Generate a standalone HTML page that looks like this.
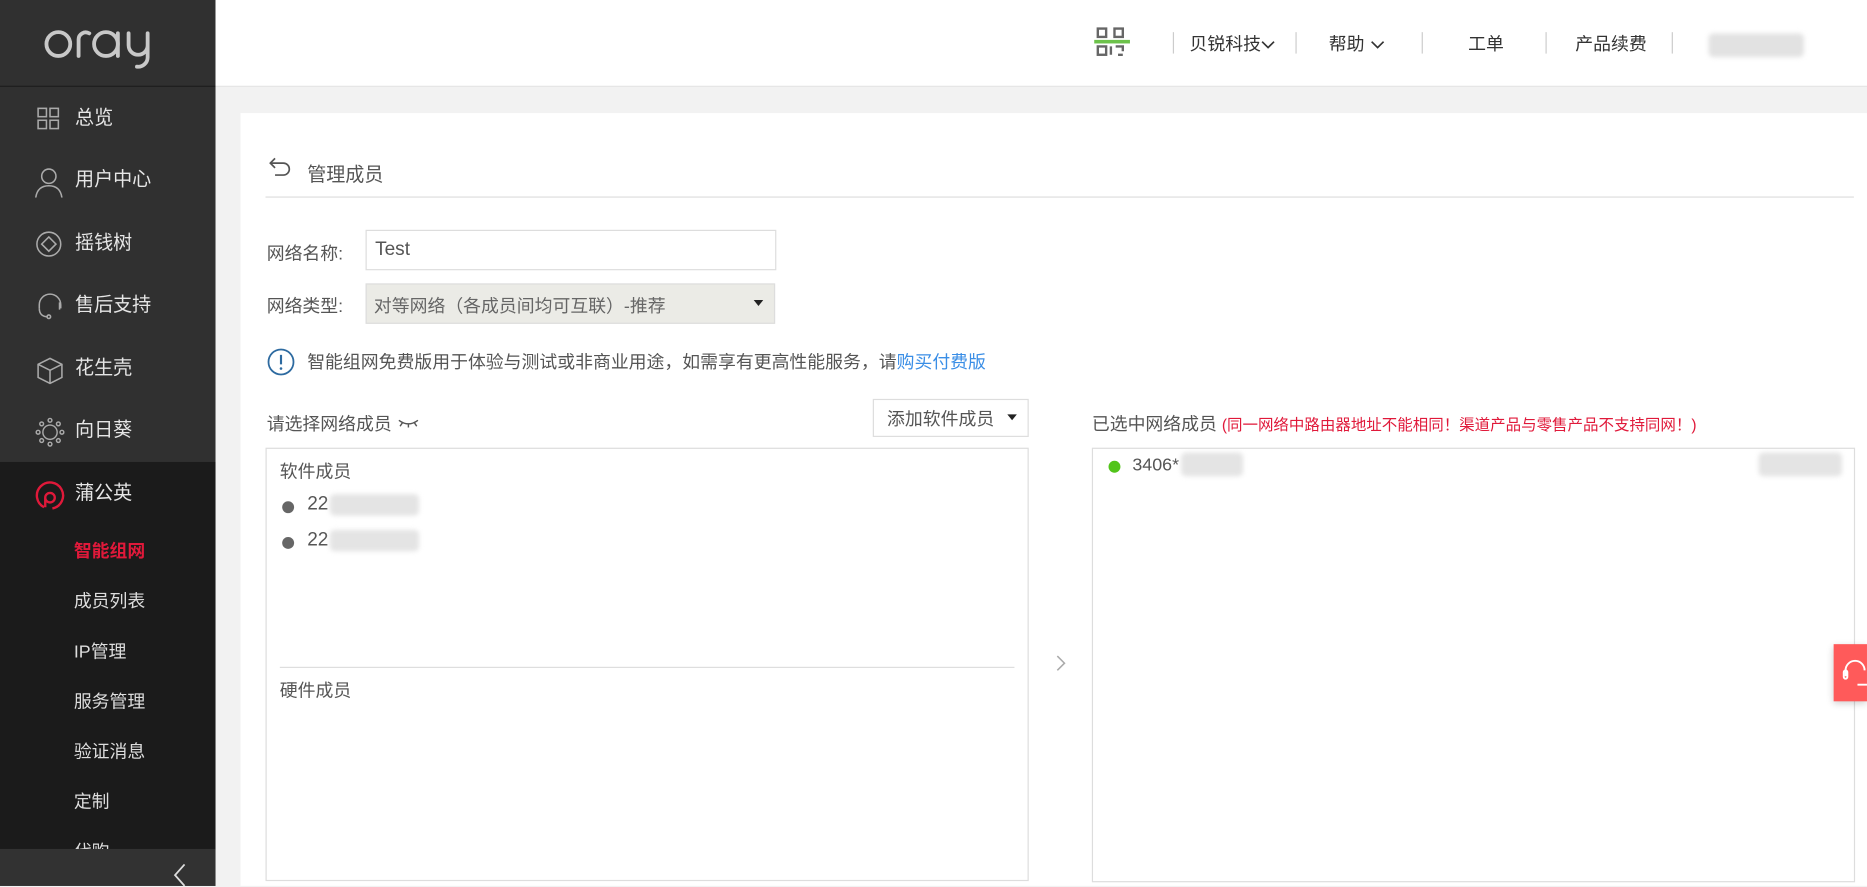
<!DOCTYPE html>
<html><head><meta charset="utf-8"><style>
*{margin:0;padding:0;box-sizing:border-box}
html,body{width:1867px;height:886px;overflow:hidden;background:#f2f2f2}
body{font-family:"Liberation Sans","Noto Sans CJK SC",sans-serif;color:#333}
#w{position:absolute;left:0;top:0;width:1568px;height:744px;transform:scale(1.19068);transform-origin:0 0;background:#f2f2f2}
.abs{position:absolute}
#side{left:0;top:0;width:181px;height:744px;background:#303030}
#logo{left:0;top:0;width:181px;height:73px;border-bottom:1px solid #1e1e1e}
.nav{position:absolute;left:0;width:181px;height:52px;color:#e6e6e6;font-size:16px;line-height:54px;padding-left:63px}
.nav svg{position:absolute;left:29px;top:15px}
#act{left:0;top:388px;width:181px;height:326px;background:#1b1b1b}
.sub{position:absolute;left:62px;font-size:15px;color:#ddd}
#bot{left:0;top:713px;width:181px;height:31px;background:#323232}
#hdr{left:181px;top:0;width:1387px;height:73px;background:#fff;border-bottom:1px solid #e4e4e4}
.ht{position:absolute;top:26px;font-size:15px;color:#333}
.sep{position:absolute;top:27px;width:1px;height:18px;background:#ccc}
#card{left:202px;top:95px;width:1366px;height:649px;background:#fff}
.lbl{position:absolute;font-size:15px;color:#555}
.blur{position:absolute;background:#e4e4e4;filter:blur(2px);border-radius:4px}
.tri{position:absolute;right:9px;top:50%;margin-top:-3px;width:0;height:0;border-left:4px solid transparent;border-right:4px solid transparent;border-top:5px solid #222}
</style></head><body><div id="w">
<div id="side" class="abs">
 <div id="logo" class="abs">
  <svg width="181" height="73" viewBox="0 0 181 73"><g fill="none" stroke="#c8c8c8" stroke-width="3.2" stroke-linecap="round">
  <circle cx="49" cy="37" r="10"/><path d="M66 47V33a6 6 0 0 1 9-5"/><circle cx="89" cy="37" r="10"/><path d="M99 28v19"/><path d="M108 28v10a8 8 0 0 0 16 0V28M124 38v10a8 8 0 0 1-9 8"/></g></svg>
 </div>
 <div class="nav" style="top:73px">总览<svg width="22" height="22" viewBox="0 0 22 22" fill="none" stroke="#aaa" stroke-width="1.3"><rect x="3" y="3" width="7" height="7"/><rect x="13" y="3" width="7" height="7"/><rect x="3" y="13" width="7" height="7"/><rect x="13" y="13" width="7" height="7"/></svg></div>
 <div class="nav" style="top:125px">用户中心<svg width="24" height="26" viewBox="0 0 24 26" fill="none" stroke="#aaa" stroke-width="1.3"><circle cx="12" cy="8" r="6"/><path d="M1 26c1-7 5-10 11-10s10 3 11 10"/></svg></div>
 <div class="nav" style="top:178px">摇钱树<svg width="24" height="24" viewBox="0 0 24 24" fill="none" stroke="#aaa" stroke-width="1.3"><circle cx="12" cy="12" r="10"/><path d="M12 6l6 6-6 6-6-6z"/></svg></div>
 <div class="nav" style="top:230px">售后支持<svg width="26" height="24" viewBox="0 0 26 24" fill="none" stroke="#aaa" stroke-width="1.3"><path d="M4 14V11a9 9 0 0 1 18 0v3"/><path d="M4 14c0 5 3 7 7 7"/><circle cx="12" cy="21" r="1.5"/><path d="M21 9v6"/></svg></div>
 <div class="nav" style="top:283px">花生壳<svg width="26" height="26" viewBox="0 0 26 26" fill="none" stroke="#aaa" stroke-width="1.3"><path d="M3 8l10-5 10 5v11l-10 5-10-5z"/><path d="M3 8l10 5 10-5M13 13v11"/></svg></div>
 <div class="nav" style="top:335px">向日葵<svg width="26" height="26" viewBox="0 0 26 26" fill="none" stroke="#aaa" stroke-width="1.2"><circle cx="13" cy="13" r="6"/><circle cx="13" cy="3" r="1.6"/><circle cx="13" cy="23" r="1.6"/><circle cx="3" cy="13" r="1.6"/><circle cx="23" cy="13" r="1.6"/><circle cx="6" cy="6" r="1.6"/><circle cx="20" cy="6" r="1.6"/><circle cx="6" cy="20" r="1.6"/><circle cx="20" cy="20" r="1.6"/></svg></div>
 <div id="act" class="abs"></div>
 <div class="nav" style="top:388px">蒲公英<svg width="26" height="26" viewBox="0 0 26 26" fill="none" stroke="#e0193a" stroke-width="2"><path d="M8 23A11 11 0 1 1 15 24"/><circle cx="13" cy="15" r="4"/><path d="M9 15v8"/></svg></div>
 <div class="sub" style="top:452px;color:#e0193a;font-weight:bold">智能组网</div>
 <div class="sub" style="top:494px">成员列表</div>
 <div class="sub" style="top:536px">IP管理</div>
 <div class="sub" style="top:578px">服务管理</div>
 <div class="sub" style="top:620px">验证消息</div>
 <div class="sub" style="top:662px">定制</div>
 <div class="sub" style="top:704px">代购</div>
 <div id="bot" class="abs"><svg class="abs" style="left:145px;top:12px" width="12" height="20" viewBox="0 0 12 20" fill="none" stroke="#ddd" stroke-width="1.5"><path d="M10 1L2 10l8 9"/></svg></div>
</div>
<div id="hdr" class="abs">
 <svg class="abs" style="left:737px;top:22px" width="32" height="28" viewBox="0 0 32 28"><g fill="none" stroke="#666" stroke-width="2"><rect x="4" y="2" width="7" height="7"/><rect x="18" y="2" width="7" height="7"/><rect x="4" y="17" width="7" height="7"/><path d="M15 17v7M19 17h6v4M21 24h4"/></g><rect x="1" y="11.5" width="30" height="3" fill="#6cc24a"/></svg>
 <div class="sep" style="left:804px"></div><div class="ht" style="left:818px">贝锐科技<svg width="12" height="10" viewBox="0 0 12 10" fill="none" stroke="#333" stroke-width="1.4"><path d="M1 3l5 5 5-5"/></svg></div>
 <div class="sep" style="left:907px"></div><div class="ht" style="left:935px">帮助 <svg width="14" height="10" viewBox="0 0 14 10" fill="none" stroke="#333" stroke-width="1.4"><path d="M2 3l5 5 5-5"/></svg></div>
 <div class="sep" style="left:1013px"></div><div class="ht" style="left:1052px">工单</div>
 <div class="sep" style="left:1117px"></div><div class="ht" style="left:1142px">产品续费</div>
 <div class="sep" style="left:1223px"></div>
 <div class="blur" style="left:1254px;top:28px;width:80px;height:20px;background:#e2e2e2"></div>
</div>
<div id="card" class="abs">
 <svg class="abs" style="left:24px;top:37px" width="20" height="16" viewBox="0 0 20 16" fill="none" stroke="#555" stroke-width="1.4"><path d="M5 1L1 5l4 4"/><path d="M1 5h11a5 5 0 0 1 0 10H5"/></svg>
 <div class="lbl" style="left:56px;top:38px;font-size:16px">管理成员</div>
 <div class="abs" style="left:21px;top:70px;width:1334px;height:1px;background:#ddd"></div>
 <div class="lbl" style="left:22px;top:107px">网络名称:</div>
 <div class="abs" style="left:105px;top:98px;width:345px;height:34px;border:1px solid #ddd;font-size:16px;color:#555;padding:7px 7px">Test</div>
 <div class="lbl" style="left:22px;top:151px">网络类型:</div>
 <div class="abs" style="left:105px;top:143px;width:344px;height:34px;border:1px solid #ddd;background:#ebebe6;font-size:15px;color:#666;padding:7px 6px">对等网络（各成员间均可互联）-推荐<span class="tri"></span></div>
 <svg class="abs" style="left:22px;top:197px" width="24" height="24" viewBox="0 0 24 24"><circle cx="12" cy="12" r="10.5" fill="none" stroke="#2d6aa0" stroke-width="1.5"/><path d="M12 6v8" stroke="#2d6aa0" stroke-width="1.8"/><circle cx="12" cy="17.5" r="1.1" fill="#2d6aa0"/></svg>
 <div class="lbl" style="left:56px;top:198px">智能组网免费版用于体验与测试或非商业用途，如需享有更高性能服务，请<span style="color:#3a8ee6">购买付费版</span></div>
 <div class="lbl" style="left:22px;top:250px">请选择网络成员 <svg width="20" height="10" viewBox="0 0 20 10" fill="none" stroke="#555" stroke-width="1.2"><path d="M2 2q8 6 16 0M5 4l-2 3M10 5v3M15 4l2 3"/></svg></div>
 <div class="abs" style="left:531px;top:240px;width:131px;height:32px;border:1px solid #ddd;font-size:15px;color:#555;padding:5px 11px">添加软件成员<span class="tri"></span></div>
 <div class="abs" style="left:21px;top:281px;width:641px;height:364px;border:1px solid #ddd"></div>
 <div class="lbl" style="left:33px;top:290px">软件成员</div>
 <div class="abs" style="left:35px;top:326px;width:10px;height:10px;border-radius:50%;background:#666"></div>
 <div class="lbl" style="left:56px;top:320px;font-size:16px">22</div>
 <div class="blur" style="left:75px;top:320px;width:75px;height:18px"></div>
 <div class="abs" style="left:35px;top:356px;width:10px;height:10px;border-radius:50%;background:#666"></div>
 <div class="lbl" style="left:56px;top:350px;font-size:16px">22</div>
 <div class="blur" style="left:75px;top:350px;width:75px;height:18px"></div>
 <div class="abs" style="left:33px;top:465px;width:617px;height:1px;background:#ddd"></div>
 <div class="lbl" style="left:33px;top:474px">硬件成员</div>
 <svg class="abs" style="left:684px;top:454px" width="10" height="16" viewBox="0 0 10 16" fill="none" stroke="#aaa" stroke-width="1.3"><path d="M2 2l6 6-6 6"/></svg>
 <div class="lbl" style="left:715px;top:250px">已选中网络成员 <span style="color:#e0193a;font-size:13px">(同一网络中路由器地址不能相同！渠道产品与零售产品不支持同网！)</span></div>
 <div class="abs" style="left:715px;top:281px;width:641px;height:365px;border:1px solid #ddd"></div>
 <div class="abs" style="left:729px;top:292px;width:10px;height:10px;border-radius:50%;background:#52c41a"></div>
 <div class="lbl" style="left:749px;top:287px;font-size:15px">3406*</div>
 <div class="blur" style="left:790px;top:285px;width:52px;height:20px"></div>
 <div class="blur" style="left:1275px;top:285px;width:70px;height:20px"></div>
</div>
<div class="abs" style="left:1540px;top:541px;width:28px;height:48px;background:#ff5a5a;box-shadow:0 2px 6px rgba(0,0,0,.2)"><svg width="28" height="48" viewBox="0 0 28 48" fill="none" stroke="#fff" stroke-width="1.6"><path d="M10 27v-5a8 8 0 0 1 16 0"/><rect x="8.5" y="22" width="3" height="7" rx="1.5"/><path d="M20 34h8"/></svg></div>
</div></body></html>
